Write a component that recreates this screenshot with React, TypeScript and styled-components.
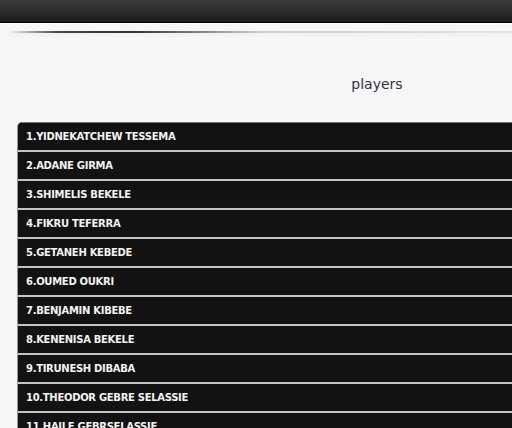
import React from "react";
import styled, { createGlobalStyle } from "styled-components";

const Global = createGlobalStyle`
  html, body { margin: 0; padding: 0; background: #f7f7f7; overflow: hidden; }
  body { width: 512px; height: 428px; }
`;

const Page = styled.div`
  width: 512px;
  height: 428px;
  overflow: hidden;
  background: #f7f7f7;
  display: flex;
  flex-direction: column;
`;

const TopBar = styled.div`
  height: 22px;
  flex: none;
  background: linear-gradient(#3a3a3a, #1d1d1d);
  border-bottom: 1px solid #000;
  box-shadow: 0 1px 0 #fff;
`;

const ShadowLine = styled.div`
  flex: none;
  margin: 8px 0 0 8px;
  height: 2px;
  background: linear-gradient(
    90deg,
    rgba(80, 80, 80, 0) 0%,
    #444 10%,
    #333 25%,
    #cfcfcf 50%,
    #e4e4e4 100%
  );
  box-shadow: 0 2px 4px rgba(0, 0, 0, 0.06);
`;

const Title = styled.h1`
  margin: 42px 0 0 0;
  padding-left: 242px;
  text-align: center;
  font-family: "DejaVu Sans", sans-serif;
  font-weight: normal;
  font-size: 14px;
  line-height: 18px;
  color: #2e3542;
`;

const List = styled.ul`
  list-style: none;
  margin: 29px 0 0 17px;
  padding: 0;
  width: 560px;
  flex: none;
  border-top: 1px solid #777;
  border-left: 1px solid #9a9a9a;
  border-top-left-radius: 5px;
  overflow: hidden;
  background: #121212;
`;

const Row = styled.li`
  height: 27px;
  border-bottom: 2px solid #c4c4c4;
  display: flex;
  align-items: center;
  padding-left: 8px;
  background: #121212;
  color: #f4f4f4;
  font-family: "DejaVu Sans", sans-serif;
  font-weight: bold;
  font-size: 10px;
  letter-spacing: -0.3px;
  text-transform: uppercase;
  white-space: nowrap;
`;

const players = [
  "Yidnekatchew Tessema",
  "Adane Girma",
  "Shimelis Bekele",
  "Fikru Teferra",
  "Getaneh Kebede",
  "Oumed Oukri",
  "Benjamin Kibebe",
  "Kenenisa Bekele",
  "Tirunesh Dibaba",
  "Theodor Gebre Selassie",
  "Haile Gebrselassie",
];

export default function App() {
  return (
    <Page>
      <Global />
      <TopBar />
      <ShadowLine />
      <Title>players</Title>
      <List>
        {players.map((p, i) => (
          <Row key={p}>
            {i + 1}.{p}
          </Row>
        ))}
      </List>
    </Page>
  );
}
